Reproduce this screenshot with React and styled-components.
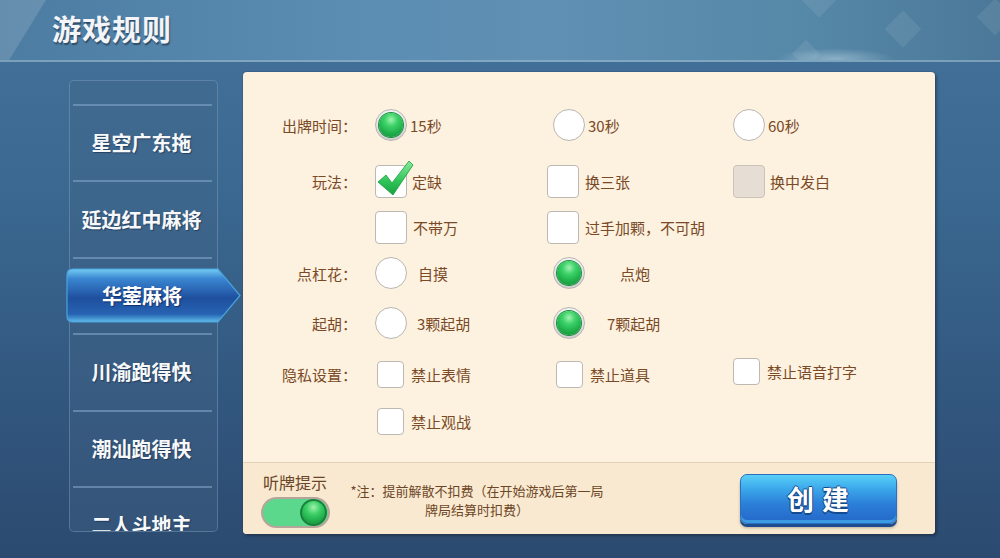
import React from 'react';
import styled, { createGlobalStyle } from 'styled-components';

const GlobalStyle = createGlobalStyle`
  html, body {
    margin: 0;
    padding: 0;
  }
  body {
    width: 1000px;
    height: 558px;
    overflow: hidden;
    font-family: "Noto Sans CJK SC", "Noto Sans", sans-serif;
  }
`;

const games = ['星空广东拖', '延边红中麻将', '华蓥麻将', '川渝跑得快', '潮汕跑得快', '二人斗地主'];

const Radio = ({ on }) => (on ? <RadioOn><Ball /></RadioOn> : <RadioOff />);

const Check = ({ on, disabled, small }) => (
  <Box $small={small} $disabled={disabled}>
    {on && (
      <svg width="40" height="40" viewBox="0 0 40 40">
        <defs>
          <linearGradient id="ck" x1="0" y1="0" x2="0" y2="1">
            <stop offset="0" stopColor="#8be99a" />
            <stop offset="0.6" stopColor="#2ec457" />
            <stop offset="1" stopColor="#17a040" />
          </linearGradient>
        </defs>
        <path d="M2 24 L10 17 L16 25 L33 3 L37 7 L17 37 Z" fill="url(#ck)" stroke="#1a9a3f" strokeWidth="0.8" strokeLinejoin="round" />
      </svg>
    )}
  </Box>
);

const App = () => {
  return (
    <>
      <GlobalStyle />
      <Page>
        <Header>
          <Title>游戏规则</Title>
          <Diamond style={{ left: 806, top: -14 }} $s={26} />
          <Diamond style={{ left: 890, top: 16 }} $s={26} />
          <Diamond style={{ left: 982, top: 4 }} $s={26} />
          <Diamond style={{ left: 796, top: 44 }} $s={20} />
          <Glow />
        </Header>
        <Body>
          <Sidebar>
            {games.map((g, i) => (
              <SideItem key={g} $sel={i === 2}>
                {i === 2 ? (
                  <Tab>
                    <svg width="176" height="55" viewBox="0 0 176 55">
                      <defs>
                        <linearGradient id="tab" x1="0" y1="0" x2="0" y2="1">
                          <stop offset="0" stopColor="#74cdf2" />
                          <stop offset="0.18" stopColor="#3a86d2" />
                          <stop offset="0.55" stopColor="#1f509e" />
                          <stop offset="0.85" stopColor="#2663b2" />
                          <stop offset="1" stopColor="#5fbbe9" />
                        </linearGradient>
                      </defs>
                      <path d="M7 1 H152 L174 27.5 L152 54 H7 Q1 54 1 48 V7 Q1 1 7 1 Z" fill="url(#tab)" stroke="#4aa3df" strokeWidth="1.2" />
                    </svg>
                    <TabText>{g}</TabText>
                  </Tab>
                ) : (
                  <SideText>{g}</SideText>
                )}
              </SideItem>
            ))}
          </Sidebar>
          <Panel>
            <Options>
              <Row $mt={0}>
                <Label>出牌时间：</Label>
                <Option><Radio on /><OptText $ml={3}>15秒</OptText></Option>
                <Option><Radio /><OptText $ml={3}>30秒</OptText></Option>
                <Option><Radio /><OptText $ml={3}>60秒</OptText></Option>
              </Row>
              <Row $mt={10}>
                <Label>玩法：</Label>
                <Option><Check on /><OptText $ml={5}>定缺</OptText></Option>
                <Option $dx={-6}><Check /><OptText $ml={6}>换三张</OptText></Option>
                <Option><Check disabled /><OptText $ml={5}>换中发白</OptText></Option>
              </Row>
              <Row $mt={0}>
                <Label />
                <Option><Check /><OptText $ml={6}>不带万</OptText></Option>
                <Option $dx={-6}><Check /><OptText $ml={6}>过手加颗，不可胡</OptText></Option>
              </Row>
              <Row $mt={0}>
                <Label>点杠花：</Label>
                <Option><Radio /><OptText $ml={11}>自摸</OptText></Option>
                <Option><Radio on /><OptText $ml={35}>点炮</OptText></Option>
              </Row>
              <Row $mt={4}>
                <Label>起胡：</Label>
                <Option><Radio /><OptText $ml={10}>3颗起胡</OptText></Option>
                <Option><Radio on /><OptText $ml={22}>7颗起胡</OptText></Option>
              </Row>
              <Row $mt={5}>
                <Label>隐私设置：</Label>
                <Option $dx={2}><Check small /><OptText $ml={7}>禁止表情</OptText></Option>
                <Option $dx={3}><Check small /><OptText $ml={7}>禁止道具</OptText></Option>
                <Option $dy={-3}><Check small /><OptText $ml={7}>禁止语音打字</OptText></Option>
              </Row>
              <Row $mt={1}>
                <Label />
                <Option $dx={2}><Check small /><OptText $ml={7}>禁止观战</OptText></Option>
              </Row>
            </Options>
            <Footer>
              <HintBlock>
                <HintTitle>听牌提示</HintTitle>
                <Toggle><Knob /></Toggle>
              </HintBlock>
              <Note>
                <NoteLine>*注：提前解散不扣费（在开始游戏后第一局</NoteLine>
                <NoteLine>牌局结算时扣费）</NoteLine>
              </Note>
              <CreateButton>创 建</CreateButton>
            </Footer>
          </Panel>
        </Body>
      </Page>
    </>
  );
};

const Page = styled.div`
  position: relative;
  width: 1000px;
  height: 558px;
  display: flex;
  flex-direction: column;
  overflow: hidden;
  background: linear-gradient(180deg, #44729b 0%, #3a6890 35%, #31557d 75%, #2c4a6f 100%);
`;

const Header = styled.div`
  position: relative;
  flex-shrink: 0;
  height: 62px;
  box-sizing: border-box;
  display: flex;
  align-items: center;
  padding: 0 0 4px 52px;
  background: linear-gradient(90deg, #4c7ca1 0%, #5b8cb2 35%, #6090b3 55%, #5688a8 80%, #4b7898 100%);
  border-bottom: 2px solid rgba(160, 190, 210, 0.55);
  overflow: hidden;
  &::before {
    content: '';
    position: absolute;
    left: 0;
    top: 0;
    width: 46px;
    height: 60px;
    background: rgba(255, 255, 255, 0.14);
    clip-path: polygon(0 0, 100% 0, 20% 100%, 0 100%);
  }
`;

const Title = styled.div`
  position: relative;
  z-index: 1;
  font-size: 29px;
  font-weight: 700;
  letter-spacing: 1px;
  color: #f3f5f8;
  text-shadow: 1px 2px 1px rgba(30, 50, 75, 0.65);
`;

const Diamond = styled.div`
  position: absolute;
  width: ${p => p.$s}px;
  height: ${p => p.$s}px;
  transform: rotate(45deg);
  background: rgba(255, 255, 255, 0.08);
`;

const Glow = styled.div`
  position: absolute;
  left: 775px;
  bottom: -10px;
  width: 120px;
  height: 22px;
  border-radius: 50%;
  background: radial-gradient(ellipse at center, rgba(225, 240, 250, 0.4) 0%, rgba(200, 225, 245, 0) 70%);
`;

const Body = styled.div`
  flex: 1;
  display: flex;
  align-items: flex-start;
  padding: 10px 0 0 69px;
`;

const Sidebar = styled.div`
  width: 149px;
  height: 452px;
  margin-top: 8px;
  box-sizing: border-box;
  padding-top: 23px;
  border: 1px solid rgba(150, 180, 210, 0.35);
  border-radius: 5px;
  background: rgba(70, 100, 135, 0.35);
  overflow-x: visible;
  overflow-y: clip;
`;

const SideItem = styled.div`
  position: relative;
  height: 76.4px;
  display: flex;
  align-items: center;
  justify-content: ${p => (p.$sel ? 'flex-start' : 'center')};
  padding-right: ${p => (p.$sel ? 0 : 4)}px;
  &::before {
    content: '';
    position: absolute;
    left: 3px;
    right: 5px;
    top: 0;
    height: 2px;
    background: rgba(135, 170, 205, 0.55);
  }
`;

const SideText = styled.div`
  font-size: 20px;
  font-weight: 700;
  color: #f6f8fa;
  text-shadow: 1px 1px 1px rgba(20, 40, 70, 0.6);
  margin-top: 1px;
`;

const Tab = styled.div`
  position: relative;
  flex-shrink: 0;
  width: 176px;
  height: 55px;
  margin-left: -4px;
  margin-top: 1px;
  display: flex;
  align-items: center;
  svg {
    position: absolute;
    left: 0;
    top: 0;
  }
`;

const TabText = styled.div`
  position: relative;
  width: 152px;
  text-align: center;
  font-size: 20px;
  font-weight: 700;
  color: #ffffff;
  text-shadow: 1px 1px 1px rgba(10, 30, 80, 0.7);
`;

const Panel = styled.div`
  width: 692px;
  height: 462px;
  margin-left: 25px;
  display: flex;
  flex-direction: column;
  border-radius: 4px;
  overflow: hidden;
  background: #fdf1e0;
  box-shadow: 0 0 0 1px rgba(40, 60, 90, 0.2), 2px 2px 3px rgba(0, 0, 0, 0.3);
`;

const Options = styled.div`
  flex: 1;
  padding-top: 30px;
`;

const Row = styled.div`
  display: grid;
  grid-template-columns: 132px 178px 180px 1fr;
  align-items: center;
  height: 46px;
  margin-top: ${p => p.$mt}px;
`;

const Label = styled.div`
  text-align: right;
  padding-right: 18px;
  font-size: 15px;
  color: #7a4a26;
`;

const Option = styled.div`
  display: flex;
  align-items: center;
  margin-left: ${p => p.$dx || 0}px;
  margin-top: ${p => (p.$dy || 0) * 2}px;
`;

const OptText = styled.span`
  margin-left: ${p => p.$ml}px;
  font-size: 15px;
  color: #7a4a26;
  white-space: nowrap;
`;

const RadioOff = styled.div`
  width: 32px;
  height: 32px;
  box-sizing: border-box;
  border-radius: 50%;
  background: #ffffff;
  border: 1.5px solid #b9b6b2;
  flex-shrink: 0;
`;

const RadioOn = styled.div`
  width: 32px;
  height: 32px;
  box-sizing: border-box;
  border-radius: 50%;
  background: linear-gradient(180deg, #f4f4f4, #cfcfcf);
  border: 1.5px solid #b9b6b2;
  display: flex;
  align-items: center;
  justify-content: center;
  flex-shrink: 0;
`;

const Ball = styled.div`
  width: 24px;
  height: 24px;
  border-radius: 50%;
  background: radial-gradient(circle at 50% 28%, #a3f3b0 0%, #3ed36a 30%, #1fae4a 65%, #138a38 100%);
  box-shadow: 0 0 0 1px #17903c;
`;

const Box = styled.div`
  position: relative;
  width: ${p => (p.$small ? 27 : 32)}px;
  height: ${p => (p.$small ? 27 : 33)}px;
  box-sizing: border-box;
  border-radius: 4px;
  background: ${p => (p.$disabled ? '#e6ded4' : '#ffffff')};
  border: 1.5px solid ${p => (p.$disabled ? '#cbc3ba' : '#bdb8b2')};
  flex-shrink: 0;
  svg {
    position: absolute;
    left: 0;
    top: -8px;
  }
`;

const Footer = styled.div`
  height: 72px;
  box-sizing: border-box;
  display: flex;
  align-items: center;
  padding-left: 18px;
  background: #f8e9d0;
  border-top: 1px solid #e3d2b5;
`;

const HintBlock = styled.div`
  display: flex;
  flex-direction: column;
  align-items: flex-start;
  margin-top: 2px;
`;

const HintTitle = styled.div`
  font-size: 16px;
  color: #6b4526;
  margin-left: 2px;
  line-height: 20px;
`;

const Toggle = styled.div`
  position: relative;
  width: 69px;
  height: 31px;
  margin-top: 5px;
  box-sizing: border-box;
  border-radius: 16px;
  background: #5bd88c;
  border: 2px solid #b7a59c;
  display: flex;
  align-items: center;
  justify-content: flex-end;
  padding-right: 1px;
`;

const Knob = styled.div`
  width: 27px;
  height: 27px;
  box-sizing: border-box;
  border-radius: 50%;
  border: 2px solid #1b7f3c;
  background: radial-gradient(circle at 50% 28%, #9ff0ae 0%, #3ccf66 35%, #1ea94a 70%, #168a3a 100%);
`;

const Note = styled.div`
  width: 282px;
  margin-left: 6px;
  margin-top: 2px;
  display: flex;
  flex-direction: column;
  align-items: center;
`;

const NoteLine = styled.div`
  font-size: 13px;
  line-height: 19px;
  color: #6d4626;
  white-space: nowrap;
`;

const CreateButton = styled.div`
  margin-left: auto;
  margin-right: 38px;
  width: 157px;
  height: 50px;
  box-sizing: border-box;
  border-radius: 7px;
  border: 1px solid #2a6fc0;
  background: linear-gradient(180deg, #59d0f8 0%, #3aa6ea 30%, #2b7fd8 60%, #2568c8 100%);
  box-shadow: inset 0 -3px 0 #3b9be3, 0 3px 0 #1d4d8f, 0 4px 3px rgba(0, 0, 0, 0.25);
  display: flex;
  align-items: center;
  justify-content: center;
  font-size: 27px;
  font-weight: 700;
  letter-spacing: 1px;
  color: #ffffff;
  text-shadow: 0 2px 0 #164a8e, 1px 0 0 #164a8e, -1px 0 0 #164a8e, 0 -1px 0 #164a8e;
`;

export default App;
